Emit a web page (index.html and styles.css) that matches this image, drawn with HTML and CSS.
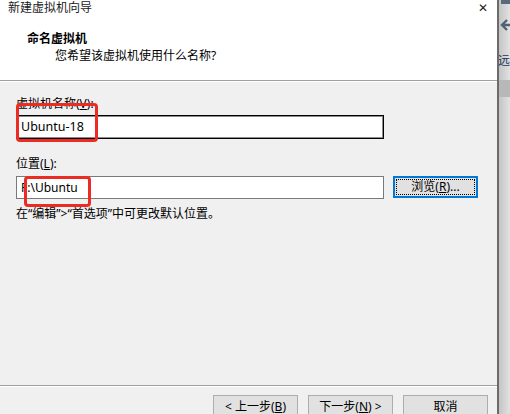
FILE: index.html
```html
<!DOCTYPE html>
<html lang="zh-CN">
<head>
    <meta charset="UTF-8">
    <meta name="viewport" content="width=device-width, initial-scale=1.0">
    <title>新建虚拟机向导</title>
    <link rel="stylesheet" href="styles.css">
</head>
<body>
    <div class="screen">
        <div class="dialog">
            <div class="titlebar">
                <span class="title">新建虚拟机向导</span>
                <span class="close">&#x2715;</span>
            </div>
            <div class="header">
                <h1>命名虚拟机</h1>
                <p>您希望该虚拟机使用什么名称?</p>
            </div>
            <div class="body">
                <div class="field">
                    <label class="label">虚拟机名称(<u>V</u>):</label>
                    <div class="input focused">Ubuntu-18</div>
                    <div class="mark mark-name"></div>
                </div>
                <div class="field">
                    <label class="label label-loc">位置(<u>L</u>):</label>
                    <div class="row">
                        <div class="input">F:\Ubuntu</div>
                        <button class="btn browse"><span class="focus-ring">浏览(<u>R</u>)...</span></button>
                    </div>
                    <div class="mark mark-loc"></div>
                </div>
                <p class="hint">在“编辑”&gt;“首选项”中可更改默认位置。</p>
            </div>
            <div class="footer">
                <button class="btn">&lt; 上一步(<u>B</u>)</button>
                <button class="btn">下一步(<u>N</u>) &gt;</button>
                <button class="btn">取消</button>
            </div>
        </div>
        <div class="side">
            <div class="side-bar"></div>
            <div class="side-arrow">
                <svg width="12" height="14" viewBox="0 0 12 14">
                    <path d="M8 2 L3 7 L8 12 M3 7 H12" fill="none" stroke="#4f6274" stroke-width="2.4"/>
                </svg>
            </div>
            <div class="side-text">远</div>
            <div class="side-dark"></div>
        </div>
    </div>
</body>
</html>
```

FILE: styles.css
```css
* {
    box-sizing: border-box;
}

body {
    margin: 0;
    font-family: "Noto Sans", "Noto Sans CJK SC", sans-serif;
    font-size: 12px;
    color: #000000;
}

.screen {
    display: flex;
    width: 510px;
    height: 414px;
    overflow: hidden;
}

.dialog {
    width: 497px;
    height: 414px;
    display: flex;
    flex-direction: column;
    background-color: #f0f0f0;
}

.titlebar {
    height: 24px;
    background-color: #ffffff;
    display: flex;
    justify-content: space-between;
    padding: 0 9px 0 8px;
    line-height: 16px;
}

.title {
    color: #1a1a1a;
}

.close {
    font-size: 12px;
    line-height: 16px;
    color: #222222;
}

.header {
    height: 57px;
    background-color: #ffffff;
    border-bottom: 1px solid #a0a0a0;
    padding: 7px 0 0 27px;
}

.header h1 {
    margin: 0;
    font-size: 12px;
    font-weight: bold;
    line-height: 16px;
}

.header p {
    margin: 1px 0 0 28px;
    line-height: 16px;
}

.body {
    flex: 1;
    border-top: 1px solid #ffffff;
    padding: 14px 113px 0 16px;
}

.body u,
.btn u {
    text-decoration: underline;
}

.field {
    position: relative;
}

.label {
    display: block;
    line-height: 16px;
    margin-bottom: 3px;
}

.label-loc {
    margin-top: 17px;
    margin-bottom: 4px;
}

.input {
    height: 23px;
    border: 1px solid #7a7a7a;
    background-color: #ffffff;
    padding-left: 4px;
    line-height: 21px;
    flex: 1;
}

.input.focused {
    height: 24px;
    border: 1px solid #000000;
    box-shadow: inset 0 0 0 1px rgba(0, 0, 0, 0.45);
    padding-left: 4px;
    line-height: 22px;
    font-size: 12.5px;
}

.row {
    display: flex;
    gap: 9px;
    margin-right: -94px;
}

.btn {
    width: 85px;
    height: 23px;
    border: 1px solid #adadad;
    background-color: #e1e1e1;
    font-family: "Noto Sans", "Noto Sans CJK SC", sans-serif;
    font-size: 12px;
    color: #000000;
    padding: 0;
    line-height: 20px;
}

.browse {
    height: 22px;
    border: 2px solid #0078d7;
    padding: 1px;
}

.focus-ring {
    display: block;
    height: 16px;
    line-height: 14px;
    border: 1px dotted #000000;
}

.hint {
    margin: 7px 0 0;
    line-height: 16px;
}

/* red annotation boxes drawn over the screenshot */
.mark {
    position: absolute;
    border: 3px solid #ec2b23;
    border-radius: 4px;
}

.mark-name {
    left: 0;
    top: 7px;
    width: 82px;
    height: 39px;
}

.mark-loc {
    left: 8px;
    top: 20px;
    width: 67px;
    height: 31px;
}

.footer {
    height: 29px;
    border-top: 1px solid #a0a0a0;
    box-shadow: inset 0 1px 0 #ffffff;
    display: flex;
    justify-content: flex-end;
    gap: 10px;
    padding: 9px 9px 0 0;
}

.footer .btn {
    flex-shrink: 0;
}

.side {
    width: 13px;
    border-left: 2px solid #6b6b6b;
    background: linear-gradient(to right, #c4c4c4, #e2e2e2);
    display: flex;
    flex-direction: column;
    overflow: hidden;
}

.side-bar {
    height: 4px;
    margin-left: 2px;
    background-color: #596a7a;
}

.side-arrow {
    margin-top: 14px;
    height: 16px;
}

.side-text {
    margin-top: 18px;
    margin-left: -1px;
    font-family: "Noto Sans CJK SC", sans-serif;
    font-size: 12px;
    line-height: 16px;
    color: #23325f;
}

.side-dark {
    margin-top: 12px;
    height: 17px;
    background-color: #b8b8b8;
}
```
